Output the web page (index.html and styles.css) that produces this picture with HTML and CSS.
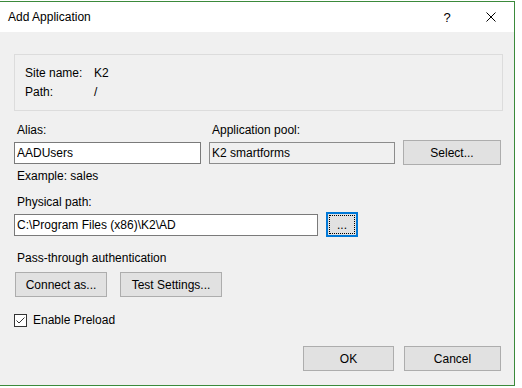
FILE: index.html
```html
<!DOCTYPE html>
<html lang="en">
<head>
    <meta charset="UTF-8">
    <meta name="viewport" content="width=device-width, initial-scale=1.0">
    <title>Add Application</title>
    <link rel="stylesheet" href="styles.css">
</head>
<body>
    <div class="dialog">
        <div class="title-bar">
            <div class="title">Add Application</div>
            <div class="title-buttons">
                <div class="title-btn help">?</div>
                <div class="title-btn close">
                    <svg width="10" height="10" viewBox="0 0 10 10">
                        <path d="M0.5 0.5 L9.5 9.5 M9.5 0.5 L0.5 9.5" stroke="#000" stroke-width="1" fill="none"/>
                    </svg>
                </div>
            </div>
        </div>

        <div class="dialog-body">
            <div class="group-box">
                <div class="info-row">
                    <span class="info-label">Site name:</span>
                    <span>K2</span>
                </div>
                <div class="info-row">
                    <span class="info-label">Path:</span>
                    <span>/</span>
                </div>
            </div>

            <div class="alias-grid">
                <label class="field-label">Alias:</label>
                <label class="field-label">Application pool:</label>
                <div></div>
                <input class="text-input alias-input" type="text" value="AADUsers">
                <input class="text-input pool-input" type="text" value="K2 smartforms" readonly>
                <button class="btn select-btn">Select...</button>
            </div>

            <div class="hint">Example: sales</div>

            <label class="field-label path-label">Physical path:</label>
            <div class="path-row">
                <input class="text-input path-input" type="text" value="C:\Program Files (x86)\K2\AD">
                <button class="btn browse-btn"><span class="focus-rect">...</span></button>
            </div>

            <div class="section-label">Pass-through authentication</div>
            <div class="auth-row">
                <button class="btn connect-btn">Connect as...</button>
                <button class="btn test-btn">Test Settings...</button>
            </div>

            <div class="check-row">
                <span class="checkbox">
                    <svg width="11" height="11" viewBox="0 0 11 11">
                        <path d="M1.5 5.5 L4 8 L9.5 2.5" stroke="#333" stroke-width="1" fill="none"/>
                    </svg>
                </span>
                <span>Enable Preload</span>
            </div>

            <div class="footer">
                <button class="btn ok-btn">OK</button>
                <button class="btn cancel-btn">Cancel</button>
            </div>
        </div>
    </div>
</body>
</html>
```

FILE: styles.css
```css
body {
    margin: 0;
    padding-top: 1px;
    background-color: #ffffff;
    font-family: "Liberation Sans", Arial, sans-serif;
    font-size: 12px;
    color: #000;
}

.dialog {
    width: 514px;
    border: 1px solid #3b8a3b;
    border-left: none;
    background-color: #f0f0f0;
}

.title-bar {
    height: 30px;
    background-color: #ffffff;
    display: flex;
    align-items: center;
    justify-content: space-between;
}

.title {
    padding-left: 8px;
    font-size: 12px;
}

.title-buttons {
    display: flex;
    height: 30px;
}

.title-btn {
    width: 44px;
    display: flex;
    align-items: center;
    justify-content: center;
}

.help {
    font-size: 13px;
}

.close {
    padding-right: 1px;
}

.dialog-body {
    padding: 22px 11px 14px 14px;
}

.group-box {
    width: 489px;
    box-sizing: border-box;
    border: 1px solid #dcdcdc;
    padding: 9px 10px 8px 10px;
}

.info-row {
    display: flex;
    line-height: 19px;
}

.info-label {
    width: 69px;
}

.alias-grid {
    display: grid;
    grid-template-columns: 187px 186px 98px;
    column-gap: 8px;
    row-gap: 2px;
    align-items: center;
    margin-top: 11px;
}

.field-label {
    display: block;
    padding-left: 3px;
    line-height: 16px;
}

.text-input {
    box-sizing: border-box;
    height: 22px;
    margin: 0;
    padding: 0 2px;
    border: 1px solid #7a7a7a;
    background-color: #ffffff;
    font-family: inherit;
    font-size: 12px;
    color: #000;
    outline: none;
}

.alias-input,
.pool-input {
    width: 100%;
}

.pool-input {
    background-color: #f0f0f0;
    border-color: #8c8c8c;
}

.btn {
    box-sizing: border-box;
    height: 25px;
    margin: 0;
    padding: 0;
    border: 1px solid #adadad;
    background-color: #e1e1e1;
    font-family: inherit;
    font-size: 12px;
    color: #000;
}

.select-btn {
    width: 98px;
}

.hint {
    margin-top: 3px;
    padding-left: 3px;
    line-height: 16px;
}

.path-label {
    margin-top: 10px;
}

.path-row {
    display: flex;
    align-items: center;
    gap: 8px;
    margin-top: 2px;
}

.path-input {
    width: 304px;
}

.browse-btn {
    width: 32px;
    border: 2px solid #0078d7;
    padding: 1px;
}

.focus-rect {
    display: flex;
    align-items: flex-end;
    justify-content: center;
    height: 100%;
    box-sizing: border-box;
    border: 1px dotted #000;
    padding-bottom: 3px;
    line-height: 10px;
}

.section-label {
    margin-top: 13px;
    padding-left: 3px;
    line-height: 16px;
}

.auth-row {
    display: flex;
    gap: 13px;
    margin-top: 6px;
    padding-left: 1px;
}

.connect-btn {
    width: 92px;
}

.test-btn {
    width: 102px;
}

.check-row {
    display: flex;
    align-items: center;
    gap: 6px;
    margin-top: 15px;
    line-height: 16px;
}

.checkbox {
    box-sizing: border-box;
    width: 13px;
    height: 13px;
    border: 1px solid #333;
    background-color: #ffffff;
    display: flex;
}

.footer {
    display: flex;
    justify-content: flex-end;
    gap: 10px;
    margin-top: 18px;
    padding-right: 2px;
}

.ok-btn {
    width: 91px;
}

.cancel-btn {
    width: 97px;
}
```
